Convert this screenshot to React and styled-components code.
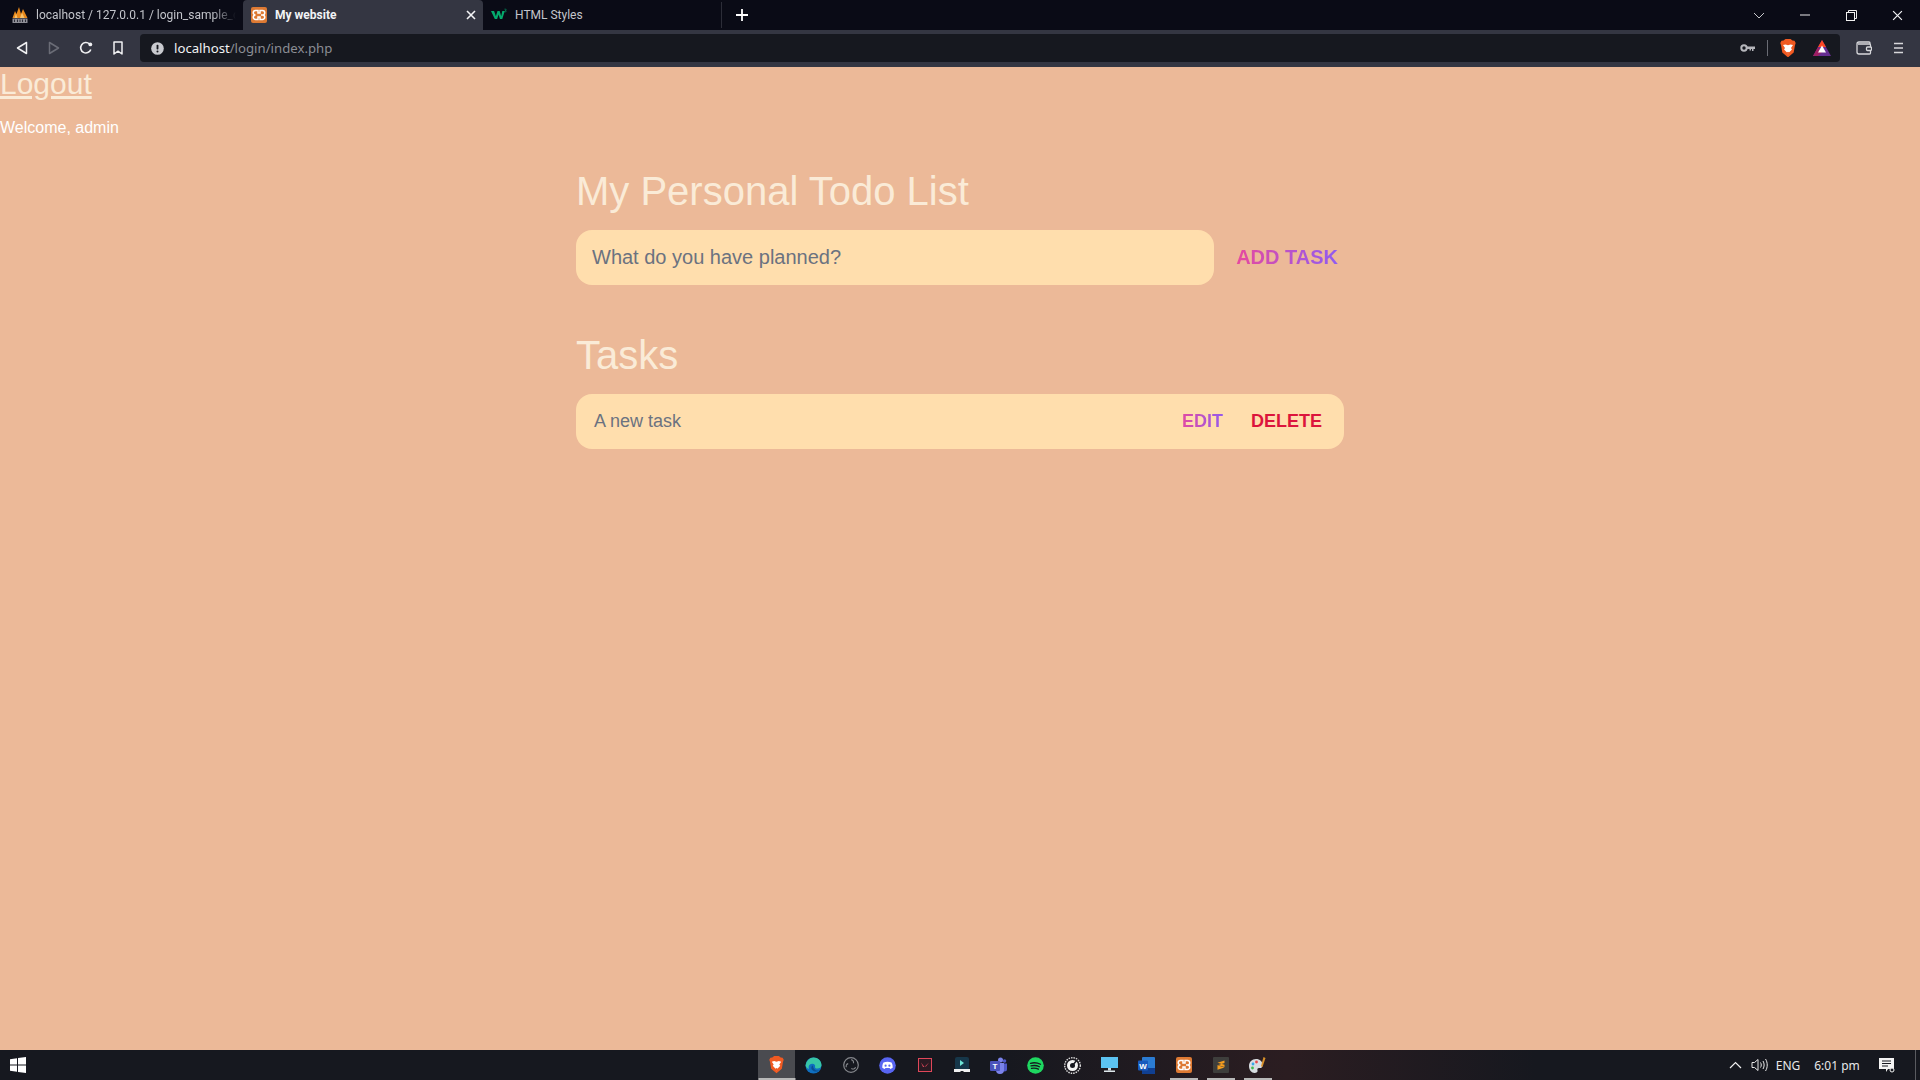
import React from 'react';
import styled, { createGlobalStyle } from 'styled-components';

const GlobalStyle = createGlobalStyle`
  * {
    box-sizing: border-box;
    margin: 0;
    padding: 0;
  }

  html, body {
    height: 100%;
    overflow: hidden;
    font-family: "Liberation Sans", Arial, sans-serif;
  }
`;

const Screen = styled.div`
  display: flex;
  flex-direction: column;
  width: 1920px;
  height: 1080px;
  overflow: hidden;
`;

/* browser chrome */
const TabBar = styled.div`
  display: flex;
  align-items: stretch;
  height: 30px;
  background: #0a0b16;
  flex-shrink: 0;
`;

const Tab = styled.div`
  position: relative;
  display: flex;
  align-items: center;
  gap: 8px;
  width: ${props => props.$width}px;
  padding: 0 7px 1px ${props => props.$left}px;
  background: ${props => (props.$active ? '#343642' : 'transparent')};
  border-radius: ${props => (props.$active ? '4px 4px 0 0' : '0')};
  overflow: hidden;

  &::after {
    content: '';
    display: ${props => (props.$divider ? 'block' : 'none')};
    position: absolute;
    right: 0;
    top: 2px;
    bottom: 2px;
    width: 1px;
    background: #2c2d38;
  }
`;

const TabTitle = styled.span`
  flex: 1;
  min-width: 0;
  font-family: Roboto, sans-serif;
  font-size: 12px;
  font-weight: ${props => (props.$active ? 700 : 400)};
  color: ${props => (props.$active ? '#f2f3f5' : '#c3c5cb')};
  white-space: nowrap;
  overflow: hidden;
  ${props => (props.$fade ? 'mask-image: linear-gradient(to right, #000 88%, transparent);' : '')}
`;

const NewTab = styled.div`
  display: flex;
  align-items: center;
  justify-content: center;
  width: 40px;
`;

const WindowControls = styled.div`
  display: flex;
  align-items: center;
  margin-left: auto;
`;

const WindowButton = styled.div`
  display: flex;
  align-items: center;
  justify-content: center;
  width: 46px;
`;

const Toolbar = styled.div`
  display: flex;
  align-items: flex-start;
  height: 37px;
  padding-top: 4px;
  background: #343642;
  flex-shrink: 0;
`;

const NavButton = styled.div`
  display: flex;
  align-items: center;
  justify-content: center;
  width: 32px;
  height: 28px;
`;

const NavGroup = styled.div`
  display: flex;
  padding-left: 6px;
  width: 140px;
`;

const UrlBox = styled.div`
  display: flex;
  align-items: center;
  width: 1700px;
  height: 28px;
  padding: 0 9px 0 11px;
  background: #16181f;
  border-radius: 4px;
`;

const UrlText = styled.div`
  margin-left: 10px;
  padding-bottom: 1px;
  font-family: "Noto Sans", sans-serif;
  font-size: 13.2px;
  color: #8b8d94;
  span {
    color: #f2f3f5;
  }
`;

const UrlIcons = styled.div`
  display: flex;
  align-items: center;
  margin-left: auto;
  gap: 12px;
`;

const BatSlot = styled.div`
  display: flex;
  margin-left: 5px;
`;

const UrlDivider = styled.div`
  width: 1px;
  height: 16px;
  background: #6a6c74;
`;

const ToolbarEnd = styled.div`
  display: flex;
  align-items: center;
  justify-content: space-between;
  flex: 1;
  height: 28px;
  padding: 0 16px;
`;

/* page */
const Page = styled.div`
  flex: 1;
  min-height: 0;
  background: #ecb998;
  color: #fff;
`;

const LogoutLink = styled.a`
  display: block;
  font-size: 30px;
  line-height: 34px;
  color: #faebd7;
  text-decoration: underline;
`;

const Welcome = styled.p`
  margin-top: 18px;
  font-size: 16px;
  line-height: 18px;
  color: #fff;
`;

const Header = styled.header`
  max-width: 800px;
  width: 100%;
  margin: 0 auto;
  padding: 31px 16px 31px;
`;

const Title = styled.h1`
  margin-bottom: 16px;
  font-size: 40px;
  line-height: 46px;
  font-weight: 300;
  color: #faebd7;
`;

const TaskForm = styled.form`
  display: flex;
`;

const TaskInput = styled.input`
  flex: 1 1 0%;
  min-width: 0;
  margin-right: 16px;
  padding: 16px;
  border: none;
  outline: none;
  border-radius: 16px;
  background: #ffdead;
  font-family: "Liberation Sans", Arial, sans-serif;
  font-size: 20px;
  line-height: 23px;
  color: #6b7280;

  &::placeholder {
    color: #6b7280;
    opacity: 1;
  }
`;

const gradientText = `
  background-image: linear-gradient(to right, #ec4899, #8b5cf6);
  -webkit-background-clip: text;
  background-clip: text;
  -webkit-text-fill-color: transparent;
`;

const SubmitButton = styled.button`
  padding: 1px 6px;
  border: none;
  outline: none;
  font-family: "Liberation Sans", Arial, sans-serif;
  font-size: 20px;
  font-weight: 700;
  text-transform: uppercase;
  ${gradientText}
`;

const TaskSection = styled.section`
  max-width: 800px;
  width: 100%;
  margin: 0 auto;
  padding: 16px;
`;

const TaskRow = styled.div`
  display: flex;
  justify-content: space-between;
  padding: 16px;
  background: #ffdead;
  border-radius: 16px;
`;

const TaskText = styled.div`
  padding-left: 2px;
  font-size: 18px;
  line-height: 22px;
  color: #6b7280;
`;

const Actions = styled.div`
  display: flex;
  margin: 0 -8px;
`;

const ActionButton = styled.button`
  margin: 0 8px;
  padding: 1px 6px;
  border: none;
  outline: none;
  font-family: "Liberation Sans", Arial, sans-serif;
  font-size: 18px;
  font-weight: 700;
  text-transform: uppercase;
  background-color: transparent;
  color: crimson;
  ${props => (props.$gradient ? gradientText : '')}
`;

/* taskbar */
const Taskbar = styled.div`
  display: flex;
  align-items: stretch;
  height: 30px;
  background: linear-gradient(to right, #16181f 0%, #16181f 52%, #2b1d21 67%, #16181f 80%);
  flex-shrink: 0;
`;

const StartButton = styled.div`
  display: flex;
  align-items: center;
  justify-content: center;
  width: 36px;
`;

const TaskIcons = styled.div`
  display: flex;
  margin-left: 722px;
`;

const TaskIcon = styled.div`
  position: relative;
  display: flex;
  align-items: center;
  justify-content: center;
  width: 37px;
  background: ${props => (props.$focused ? '#4a4b50' : 'transparent')};

  &::after {
    content: '';
    display: ${props => (props.$running ? 'block' : 'none')};
    position: absolute;
    bottom: 0;
    left: 50%;
    transform: translateX(-50%);
    width: ${props => (props.$focused ? 37 : 28)}px;
    height: 2px;
    background: #b8b8b8;
  }
`;

const Tray = styled.div`
  display: flex;
  align-items: center;
  margin-left: auto;
  color: #e8e8e8;
  font-family: "Noto Sans", sans-serif;
  font-size: 12px;
`;

const TrayIcon = styled.div`
  display: flex;
  align-items: center;
  justify-content: center;
  width: ${props => props.$width}px;
`;

const TrayText = styled.div`
  width: ${props => props.$width}px;
  text-align: center;
  white-space: nowrap;
`;

const DesktopEdge = styled.div`
  width: 5px;
  height: 30px;
  margin-left: 10px;
  border-left: 1px solid #5a5b60;
`;

/* icons */
const PmaIcon = () => (
  <svg width="16" height="16" viewBox="0 0 16 16">
    <path d="M.5 11 L3 4 L4.500 7 L7 0 L9 7 L11 2 L15.500 11Z" fill="#e8891c" />
    <path d="M2.500 11 L4 6.500 L5.500 11Z M8 11 L10 5.500 L12.500 11Z" fill="#f8c26a" />
    <rect x=".5" y="11.500" width="15" height="4.500" fill="#8d8d95" />
    <path d="M2.500 12.500V15M5.500 12.500V15M8 12.500V15M10.500 12.500V15M13.500 12.500V15" stroke="#2c2d38" />
  </svg>
);

const XamppIcon = ({ size = 16 }) => (
  <svg width={size} height={size} viewBox="0 0 16 16">
    <rect width="16" height="16" rx="2" fill="#de7a33" />
    <path
      d="M4.500 3.500h2.500v2.500h2v-2.500h2.500a1.500 1.500 0 0 1 0 4.500h-1.500a1.500 1.500 0 0 1 0 0h1.500a1.700 1.700 0 0 1 0 4.500h-2.500v-2.500h-2v2.500h-2.500a1.700 1.700 0 0 1 0-4.500a1.500 1.500 0 0 1 0-4.500z"
      fill="none"
      stroke="#fff"
      strokeWidth="1.500"
    />
  </svg>
);

const W3Icon = () => (
  <svg width="16" height="13" viewBox="0 0 18 14">
    <path d="M0 3h3.500l2 6 1.800-6h2.400l1.800 6 1.200-6h2.800l-2.800 9h-2.600l-1.600-5-1.600 5h-2.600z" fill="#04aa6d" />
    <path d="M15 1h2v.8l-1 .8h1v1.400h-2" fill="none" stroke="#04aa6d" strokeWidth=".6" />
  </svg>
);

const CloseIcon = ({ size = 10, color = '#f2f3f5', width = 1.600 }) => (
  <svg width={size} height={size} viewBox="0 0 10 10">
    <path d="M1 1l8 8M9 1l-8 8" stroke={color} strokeWidth={width} fill="none" />
  </svg>
);

const BackIcon = () => (
  <svg width="12" height="14" viewBox="0 0 12 14">
    <path d="M10.500 1.500v11L1.500 7z" fill="none" stroke="#f0f1f3" strokeWidth="1.500" strokeLinejoin="round" />
  </svg>
);

const ForwardIcon = () => (
  <svg width="12" height="14" viewBox="0 0 12 14">
    <path d="M1.500 1.500v11l9-5.500z" fill="none" stroke="#6a6c76" strokeWidth="1.500" strokeLinejoin="round" />
  </svg>
);

const ReloadIcon = () => (
  <svg width="14" height="14" viewBox="0 0 14 14">
    <path d="M11.800 8.500A5.200 5.200 0 1 1 10.500 3" fill="none" stroke="#f0f1f3" strokeWidth="1.600" />
    <circle cx="11.300" cy="3.400" r="1.900" fill="#f0f1f3" />
  </svg>
);

const BookmarkIcon = () => (
  <svg width="12" height="14" viewBox="0 0 12 14">
    <path d="M2 1h8v12l-4-2.800L2 13z" fill="none" stroke="#f0f1f3" strokeWidth="1.500" strokeLinejoin="round" />
  </svg>
);

const InfoIcon = () => (
  <svg width="13" height="13" viewBox="0 0 14 14">
    <circle cx="7" cy="7" r="6.800" fill="#c9cacf" />
    <rect x="6" y="3" width="2" height="5" rx=".8" fill="#16181f" />
    <circle cx="7" cy="10.200" r="1.100" fill="#16181f" />
  </svg>
);

const KeyIcon = () => (
  <svg width="15" height="8" viewBox="0 0 15 8">
    <circle cx="4" cy="4" r="2.700" fill="none" stroke="#b5b6bb" strokeWidth="2" />
    <path d="M7 2.500h8v2.500h-1.500v2H12V5h-1v1.500H9.500V5H7z" fill="#b5b6bb" />
  </svg>
);

const BraveIcon = ({ size = 16 }) => (
  <svg width={size} height={size * 1.150} viewBox="0 0 16 18.400">
    <path d="M3.500 1.500L5.500 0h5l2 1.500 2 .3 1.200 2.200-.8 2.500-1.200 7L8 18.400l-5.700-4.900-1.200-7L.3 4 1.500 1.800z" fill="#f05a22" />
    <path d="M3 6l2.500-.6L8 6.200l2.500-.8L13 6l-2 3 1 1.500-3 3-1 2-1-2-3-3L5 9z" fill="#fff" />
    <path d="M6.500 13.800L8 12.800l1.500 1L8 15.500z" fill="#f05a22" />
  </svg>
);

const BatIcon = () => (
  <svg width="18" height="16" viewBox="0 0 18 16">
    <path d="M9 0L18 16H0z" fill="#662d91" />
    <path d="M9 0L13 7.100H5z" fill="#ff4724" />
    <path d="M0 16L5 7.100 9 12 5 16z" fill="#9e1f63" />
    <path d="M9 5.500L13 12.500H5z" fill="#fff" />
  </svg>
);

const WalletIcon = () => (
  <svg width="16" height="14" viewBox="0 0 16 14">
    <path d="M14 3V2a1 1 0 0 0-1-1H3a2 2 0 0 0-2 2v8a2 2 0 0 0 2 2h10.500a1 1 0 0 0 1-1V4a1 1 0 0 0-1-1H2" fill="none" stroke="#d7d8db" strokeWidth="1.300" />
    <rect x="10.500" y="6" width="5" height="3.500" rx="1" fill="#343642" stroke="#d7d8db" strokeWidth="1.300" />
  </svg>
);

const MenuIcon = () => (
  <svg width="11" height="12" viewBox="0 0 11 12">
    <path d="M1 1.500h9M1 6h9M1 10.500h9" stroke="#d7d8db" strokeWidth="1.600" />
  </svg>
);

const ChevronIcon = ({ color = '#c8c9cc' }) => (
  <svg width="12" height="7" viewBox="0 0 12 7">
    <path d="M1 1l5 5 5-5" fill="none" stroke={color} strokeWidth="1" />
  </svg>
);

const MinIcon = () => (
  <svg width="11" height="2" viewBox="0 0 11 2">
    <path d="M0 1h10" stroke="#e8e8e8" strokeWidth="1" />
  </svg>
);

const RestoreIcon = () => (
  <svg width="11" height="11" viewBox="0 0 11 11">
    <rect x=".5" y="2.500" width="8" height="8" fill="none" stroke="#f0f0f0" />
    <path d="M2.500 2.500V.5h8v8H8.500" fill="none" stroke="#f0f0f0" />
  </svg>
);

const PlusIcon = () => (
  <svg width="12" height="12" viewBox="0 0 12 12">
    <path d="M6 0v12M0 6h12" stroke="#fff" strokeWidth="1.800" />
  </svg>
);

const WindowsIcon = () => (
  <svg width="16" height="16" viewBox="0 0 16 16">
    <path d="M0 2.200l7-1v6.400H0zM8 1l8-1v7.600H8zM0 8.400h7v6.400l-7-1zM8 8.400h8V16l-8-1.100z" fill="#fff" />
  </svg>
);

const EdgeIcon = () => (
  <svg width="17" height="17" viewBox="0 0 17 17">
    <circle cx="8.500" cy="8.500" r="8" fill="#0f6fc0" />
    <path d="M.6 9C1 3.500 5 .5 8.500.5c4.500 0 8 3.500 8 7.500 0 2.500-2 3.500-4 3.500-1.500 0-2.500-.5-2.500-1.500 .8-2-1-3.500-3-3.200C4.500 7 3 9 4 12 2.500 11.500 1.300 10.500 .6 9z" fill="#37c6a6" />
    <path d="M8 8.500c-2 .5-2.500 4 .5 5.500 2 1 4.500.5 6-.8-3 1-6.500-.5-6.500-4.700z" fill="#0a4f92" />
  </svg>
);

const ObsIcon = () => (
  <svg width="16" height="16" viewBox="0 0 16 16">
    <circle cx="8" cy="8" r="7.300" fill="none" stroke="#85878c" strokeWidth="1.200" />
    <path d="M8 2.800a2.600 2.600 0 0 1 2.400 3.500M12.600 10.300a2.600 2.600 0 0 1-4.200 1M3.400 10.300a2.600 2.600 0 0 1 1.800-3.700" fill="none" stroke="#85878c" strokeWidth="1.100" />
  </svg>
);

const DiscordIcon = () => (
  <svg width="17" height="17" viewBox="0 0 17 17">
    <circle cx="8.500" cy="8.500" r="8.300" fill="#5865f2" />
    <path d="M4.500 5.500C7 4.500 10 4.500 12.500 5.500c1 1.700 1.300 3.500 1.200 5.300-1 .7-1.800 1-2.500 1.200l-.6-1H6.400l-.6 1c-.8-.2-1.600-.5-2.500-1.200-.1-1.800.2-3.600 1.200-5.300z" fill="#fff" />
    <circle cx="6.600" cy="8.700" r="1.100" fill="#5865f2" />
    <circle cx="10.400" cy="8.700" r="1.100" fill="#5865f2" />
  </svg>
);

const ValorantIcon = () => (
  <svg width="14" height="14" viewBox="0 0 14 14">
    <rect x=".5" y=".5" width="13" height="13" fill="#2a1a22" stroke="#e0475a" />
    <path d="M3 4.500L6.500 9H5zM11 4.500L8 8.500H6.800z" fill="#e0475a" />
  </svg>
);

const StreamIcon = () => (
  <svg width="16" height="17" viewBox="0 0 16 17">
    <rect x="1" y="0" width="14" height="13" rx="2" fill="#16374a" />
    <path d="M6 3l4 3-4 3z" fill="#6ee6d6" />
    <path d="M0 12h16v3H10l-1-1H7l-1 1H0z" fill="#f0f0f0" />
  </svg>
);

const TeamsIcon = () => (
  <svg width="17" height="17" viewBox="0 0 17 17">
    <circle cx="10.500" cy="3" r="2.500" fill="#7b83eb" />
    <circle cx="14.500" cy="4" r="1.800" fill="#5059c9" />
    <path d="M12 6.500h5v5.500a2.500 2.500 0 0 1-5 0z" fill="#5059c9" />
    <path d="M6 6h8v7a3.500 3.500 0 0 1-8 0z" fill="#7b83eb" />
    <rect x="0" y="4" width="10" height="10" rx="1" fill="#4b53bc" />
    <text x="5" y="12" textAnchor="middle" fontFamily="Liberation Sans" fontWeight="700" fontSize="8" fill="#fff">T</text>
  </svg>
);

const SpotifyIcon = () => (
  <svg width="17" height="17" viewBox="0 0 17 17">
    <circle cx="8.500" cy="8.500" r="8.300" fill="#1ed760" />
    <path d="M3.500 6.300c3.200-.9 7-.6 10 1M4 8.900c2.800-.7 6-.4 8.400.9M4.500 11.400c2.300-.5 4.800-.3 6.900.8" fill="none" stroke="#16181f" strokeWidth="1.300" strokeLinecap="round" />
  </svg>
);

const DialIcon = () => (
  <svg width="17" height="17" viewBox="0 0 17 17">
    <circle cx="8.500" cy="8.500" r="7.800" fill="none" stroke="#dcdcdc" strokeWidth="1.400" strokeDasharray="1.500 1" />
    <circle cx="8.500" cy="8.500" r="5.500" fill="#f4f4f4" />
    <circle cx="8.500" cy="8.500" r="2.500" fill="#16181f" />
    <path d="M8.500 8.500L13 3" stroke="#16181f" strokeWidth="1.500" />
  </svg>
);

const MonitorIcon = () => (
  <svg width="17" height="16" viewBox="0 0 17 16">
    <rect x="0" y="0" width="17" height="11" fill="#5cc3f2" />
    <rect x="7" y="11" width="3" height="2.500" fill="#c9d8e0" />
    <rect x="3" y="13.500" width="11" height="1.500" fill="#dfe8ec" />
  </svg>
);

const WordIcon = () => (
  <svg width="17" height="17" viewBox="0 0 17 17">
    <rect x="4" y="0" width="13" height="17" rx="1" fill="#2b7cd3" />
    <rect x="4" y="11" width="13" height="6" fill="#103f91" />
    <rect x="0" y="3.500" width="10" height="10" rx="1" fill="#185abd" />
    <text x="5" y="11.500" textAnchor="middle" fontFamily="Liberation Sans" fontWeight="700" fontSize="8" fill="#fff">W</text>
  </svg>
);

const SublimeIcon = () => (
  <svg width="16" height="16" viewBox="0 0 16 16">
    <rect width="16" height="16" rx="1" fill="#3e3e3c" />
    <path d="M4.500 5.800l7-2.300v2.400L4.500 8.200zM4.500 8l7 2.100V7.700l-7-2z" fill="#f59e1f" />
    <path d="M4.500 8.200l7 2.300-7 2.300z" fill="#f59e1f" />
  </svg>
);

const PaletteIcon = () => (
  <svg width="19" height="18" viewBox="0 0 19 18">
    <path d="M1 10c0-4 3-7 7-7s6.500 2.500 6.500 6-2 3-3.500 3-2 1-1.500 2.500-1 2.500-3 2.500C3.500 17 1 14 1 10z" fill="#d8dde0" />
    <circle cx="5" cy="8" r="1.400" fill="#35a7e8" />
    <circle cx="8.500" cy="6" r="1.400" fill="#e84a4a" />
    <circle cx="4.500" cy="12" r="1.400" fill="#43b94d" />
    <path d="M15.500 1l2 1-3 9-1.500-.7z" fill="#d9912a" />
  </svg>
);

const SpeakerIcon = () => (
  <svg width="17" height="14" viewBox="0 0 17 14">
    <path d="M1 4.500h2.500L7 1.500v11L3.500 9.500H1z" fill="none" stroke="#e8e8e8" />
    <path d="M9.500 4.500c1 1.500 1 3.500 0 5M12 3c1.500 2.500 1.500 5.500 0 8M14.500 1c2.300 3.500 2.300 8.500 0 12" fill="none" stroke="#e8e8e8" />
  </svg>
);

const TrayChevron = () => (
  <svg width="13" height="8" viewBox="0 0 13 8">
    <path d="M1 7l5.500-5.500L12 7" fill="none" stroke="#f0f0f0" strokeWidth="1.200" />
  </svg>
);

const NotificationIcon = () => (
  <svg width="16" height="15" viewBox="0 0 16 15">
    <path d="M0 0h15v11H9l-2 3v-3H0z" fill="#f4f4f4" />
    <path d="M3 3h9M3 5.500h9M3 8h6" stroke="#16181f" />
    <circle cx="13" cy="12" r="2" fill="#16181f" stroke="#f4f4f4" />
  </svg>
);

const taskbarApps = [
  { id: 'brave', icon: <BraveIcon size={15} />, focused: true, running: true },
  { id: 'edge', icon: <EdgeIcon /> },
  { id: 'obs', icon: <ObsIcon /> },
  { id: 'discord', icon: <DiscordIcon /> },
  { id: 'valorant', icon: <ValorantIcon /> },
  { id: 'stream', icon: <StreamIcon /> },
  { id: 'teams', icon: <TeamsIcon /> },
  { id: 'spotify', icon: <SpotifyIcon /> },
  { id: 'dial', icon: <DialIcon /> },
  { id: 'monitor', icon: <MonitorIcon /> },
  { id: 'word', icon: <WordIcon /> },
  { id: 'xampp', icon: <XamppIcon size={16} />, running: true },
  { id: 'sublime', icon: <SublimeIcon />, running: true },
  { id: 'palette', icon: <PaletteIcon />, running: true },
];

export default function App() {
  return (
    <Screen>
      <GlobalStyle />
      <TabBar>
        <Tab $width={243} $left={12}>
          <PmaIcon />
          <TabTitle $fade>localhost / 127.0.0.1 / login_sample_db</TabTitle>
        </Tab>
        <Tab $width={240} $active $left={8}>
          <XamppIcon />
          <TabTitle $active>My website</TabTitle>
          <CloseIcon />
        </Tab>
        <Tab $width={239} $left={8} $divider>
          <W3Icon />
          <TabTitle>HTML Styles</TabTitle>
        </Tab>
        <NewTab>
          <PlusIcon />
        </NewTab>
        <WindowControls>
          <WindowButton>
            <ChevronIcon />
          </WindowButton>
          <WindowButton>
            <MinIcon />
          </WindowButton>
          <WindowButton>
            <RestoreIcon />
          </WindowButton>
          <WindowButton>
            <CloseIcon size={11} width={1.100} />
          </WindowButton>
        </WindowControls>
      </TabBar>

      <Toolbar>
        <NavGroup>
          <NavButton><BackIcon /></NavButton>
          <NavButton><ForwardIcon /></NavButton>
          <NavButton><ReloadIcon /></NavButton>
          <NavButton><BookmarkIcon /></NavButton>
        </NavGroup>
        <UrlBox>
          <InfoIcon />
          <UrlText><span>localhost</span>/login/index.php</UrlText>
          <UrlIcons>
            <KeyIcon />
            <UrlDivider />
            <BraveIcon size={16} />
            <BatSlot><BatIcon /></BatSlot>
          </UrlIcons>
        </UrlBox>
        <ToolbarEnd>
          <WalletIcon />
          <MenuIcon />
        </ToolbarEnd>
      </Toolbar>

      <Page>
        <LogoutLink href="#">Logout</LogoutLink>
        <Welcome>Welcome, admin</Welcome>
        <Header>
          <Title>My Personal Todo List</Title>
          <TaskForm onSubmit={e => e.preventDefault()}>
            <TaskInput type="text" placeholder="What do you have planned?" />
            <SubmitButton type="submit">Add task</SubmitButton>
          </TaskForm>
        </Header>
        <TaskSection>
          <Title>Tasks</Title>
          <TaskRow>
            <TaskText>A new task</TaskText>
            <Actions>
              <ActionButton $gradient>Edit</ActionButton>
              <ActionButton>Delete</ActionButton>
            </Actions>
          </TaskRow>
        </TaskSection>
      </Page>

      <Taskbar>
        <StartButton>
          <WindowsIcon />
        </StartButton>
        <TaskIcons>
          {taskbarApps.map(app => (
            <TaskIcon key={app.id} $focused={app.focused} $running={app.running}>
              {app.icon}
            </TaskIcon>
          ))}
        </TaskIcons>
        <Tray>
          <TrayIcon $width={24}><TrayChevron /></TrayIcon>
          <TrayIcon $width={24}><SpeakerIcon /></TrayIcon>
          <TrayText $width={34}>ENG</TrayText>
          <TrayText $width={64}>6:01 pm</TrayText>
          <TrayIcon $width={36}><NotificationIcon /></TrayIcon>
          <DesktopEdge />
        </Tray>
      </Taskbar>
    </Screen>
  );
}
